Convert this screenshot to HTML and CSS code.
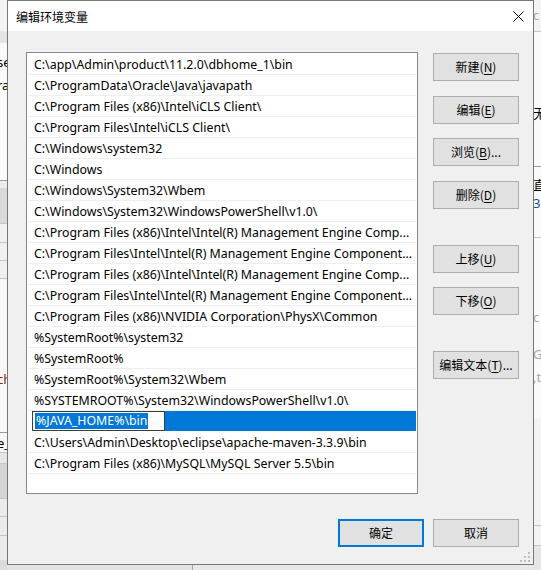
FILE: index.html
```html
<!DOCTYPE html>
<html lang="zh-CN">
<head>
<meta charset="utf-8">
<title>编辑环境变量</title>
<link rel="stylesheet" href="styles.css">
</head>
<body>
<div class="desk">
  <div class="strip strip-l">
    <div class="b h31 c-f3"></div>
    <div class="b h12 c-e4"></div>
    <div class="b h137 c-fa frag">
      <div class="fl t1">se</div>
      <div class="fl t2">ra</div>
    </div>
    <div class="ln dark"></div>
    <div class="b h7 c-ec"></div>
    <div class="b h35 c-d9"></div>
    <div class="ln"></div>
    <div class="b h18 c-f0"></div>
    <div class="ln"></div>
    <div class="b h17 c-f0"></div>
    <div class="ln"></div>
    <div class="b h17 c-f0"></div>
    <div class="ln"></div>
    <div class="b h153 c-f7 frag">
      <div class="fl t3 red">ch</div>
    </div>
    <div class="ln dark"></div>
    <div class="b h19 c-f7 frag"><div class="fl t4">e_</div></div>
    <div class="ln"></div>
    <div class="b h10 c-e6"></div>
    <div class="ln"></div>
    <div class="b h34 c-d5"></div>
    <div class="ln"></div>
    <div class="b h17 c-ec"></div>
    <div class="ln"></div>
    <div class="b h18 c-ec"></div>
    <div class="ln"></div>
    <div class="b h24 c-ec"></div>
    <div class="b fill c-dc"></div>
  </div>
  <div class="mid">
    <div class="mid-bottom">
      <div class="mb-left"></div>
      <div class="mb-right"></div>
    </div>
  </div>
  <div class="strip strip-r">
    <div class="b h31 c-f3 frag"><div class="fr r0 grey">c</div></div>
    <div class="ln"></div>
    <div class="b h134 c-fa frag"><div class="fr r1">无</div></div>
    <div class="ln dark"></div>
    <div class="b h70 c-fa frag">
      <div class="fr r2">直</div>
      <div class="fr r3 blue">3.</div>
    </div>
    <div class="ln"></div>
    <div class="b h180 c-fa frag">
      <div class="fr r4 grey">c</div>
      <div class="fr r5 grey">G</div>
      <div class="fr r6 grey">,t</div>
      <div class="fr r7">oi</div>
    </div>
    <div class="b h107 c-f3"></div>
    <div class="ln"></div>
    <div class="b h19 c-f3"></div>
    <div class="ln"></div>
    <div class="b fill c-e6"></div>
  </div>

  <div class="dialog">
    <div class="titlebar">
      <span class="title">编辑环境变量</span>
      <span class="close">
        <svg width="11" height="11" viewBox="0 0 11 11"><path d="M0.5 0.5 L10.5 10.5 M10.5 0.5 L0.5 10.5" stroke="#000" stroke-width="1" fill="none"/></svg>
      </span>
    </div>
    <div class="body">
      <div class="main">
        <div class="list">
          <div class="row">C:\app\Admin\product\11.2.0\dbhome_1\bin</div>
          <div class="row">C:\ProgramData\Oracle\Java\javapath</div>
          <div class="row">C:\Program Files (x86)\Intel\iCLS Client\</div>
          <div class="row">C:\Program Files\Intel\iCLS Client\</div>
          <div class="row">C:\Windows\system32</div>
          <div class="row">C:\Windows</div>
          <div class="row">C:\Windows\System32\Wbem</div>
          <div class="row">C:\Windows\System32\WindowsPowerShell\v1.0\</div>
          <div class="row">C:\Program Files (x86)\Intel\Intel(R) Management Engine Comp...</div>
          <div class="row">C:\Program Files\Intel\Intel(R) Management Engine Component...</div>
          <div class="row">C:\Program Files (x86)\Intel\Intel(R) Management Engine Comp...</div>
          <div class="row">C:\Program Files\Intel\Intel(R) Management Engine Component...</div>
          <div class="row">C:\Program Files (x86)\NVIDIA Corporation\PhysX\Common</div>
          <div class="row">%SystemRoot%\system32</div>
          <div class="row">%SystemRoot%</div>
          <div class="row">%SystemRoot%\System32\Wbem</div>
          <div class="row">%SYSTEMROOT%\System32\WindowsPowerShell\v1.0\</div>
          <div class="row editing">
            <div class="edit-pad"></div>
            <div class="editbox"><span class="sel">%JAVA_HOME%\bin</span></div>
            <div class="edit-fill"></div>
          </div>
          <div class="row">C:\Users\Admin\Desktop\eclipse\apache-maven-3.3.9\bin</div>
          <div class="row">C:\Program Files (x86)\MySQL\MySQL Server 5.5\bin</div>
        </div>
        <div class="side">
          <div class="btn">新建(<u>N</u>)</div>
          <div class="btn g15">编辑(<u>E</u>)</div>
          <div class="btn g14">浏览(<u>B</u>)...</div>
          <div class="btn g15">删除(<u>D</u>)</div>
          <div class="btn g36">上移(<u>U</u>)</div>
          <div class="btn g14">下移(<u>O</u>)</div>
          <div class="btn g36">编辑文本(<u>T</u>)...</div>
        </div>
      </div>
      <div class="footer">
        <div class="btn default">确定</div>
        <div class="btn">取消</div>
      </div>
    </div>
    <svg class="grip" width="11" height="11" viewBox="0 0 11 11">
      <rect x="8" y="0" width="2" height="2" fill="#bdbdbd"/>
      <rect x="4" y="4" width="2" height="2" fill="#bdbdbd"/>
      <rect x="8" y="4" width="2" height="2" fill="#bdbdbd"/>
      <rect x="0" y="8" width="2" height="2" fill="#bdbdbd"/>
      <rect x="4" y="8" width="2" height="2" fill="#bdbdbd"/>
      <rect x="8" y="8" width="2" height="2" fill="#bdbdbd"/>
    </svg>
  </div>
</div>
</body>
</html>
```

FILE: styles.css
```css
* { box-sizing: border-box; }
html, body { margin: 0; padding: 0; }
body {
  width: 541px;
  height: 570px;
  overflow: hidden;
  background: #ececec;
  font-family: "Noto Sans", "Noto Sans CJK SC", sans-serif;
  font-size: 12px;
  color: #000;
}

.desk {
  position: relative;
  width: 541px;
  height: 570px;
  display: flex;
}

/* background window fragments */
.strip {
  width: 7px;
  display: flex;
  flex-direction: column;
  overflow: hidden;
  flex: none;
}
.strip-r { width: 8px; }
.b { flex: none; }
.fill { flex: 1; }
.ln { height: 1px; flex: none; background: #c6c6c6; }
.ln.dark { background: #9a9a9a; }
.h7 { height: 7px; } .h10 { height: 10px; } .h12 { height: 12px; }
.h17 { height: 17px; } .h18 { height: 18px; } .h19 { height: 19px; }
.h24 { height: 24px; } .h31 { height: 31px; } .h34 { height: 34px; }
.h35 { height: 35px; } .h70 { height: 70px; } .h107 { height: 107px; }
.h134 { height: 134px; } .h137 { height: 137px; } .h153 { height: 153px; }
.h180 { height: 180px; }
.c-f3 { background: #f3f3f3; } .c-e4 { background: #e4e4e4; }
.c-fa { background: #fafafa; } .c-ec { background: #ececec; }
.c-d9 { background: #d9d9d9; } .c-f0 { background: #f0f0f0; }
.c-f7 { background: #f7f7f7; } .c-e6 { background: #e6e6e6; }
.c-d5 { background: #d5d5d5; } .c-dc { background: #dcdcdc; }

.frag {
  display: flex;
  flex-direction: column;
  font-size: 13px;
  line-height: 16px;
  white-space: nowrap;
}
.fl { margin-left: -3px; }
.fr { margin-left: 0; }
.t1 { margin-top: 11px; }
.t2 { margin-top: 7px; }
.t3 { margin-top: 92px; }
.t4 { margin-top: 2px; }
.r0 { margin-top: 7px; }
.r1 { margin-top: 73px; font-family: "Noto Sans CJK SC", sans-serif; }
.r2 { margin-top: 10px; font-family: "Noto Sans CJK SC", sans-serif; }
.r3 { margin-top: 2px; }
.r4 { margin-top: 71px; }
.r5 { margin-top: 21px; }
.r6 { margin-top: 7px; }
.r7 { margin-top: 40px; }
.red { color: #8a1f1f; }
.grey { color: #a9a9a9; }
.blue { color: #1d4f8f; }

.mid {
  flex: 1;
  display: flex;
  flex-direction: column;
  justify-content: flex-end;
  background: #ececec;
}
.mid-bottom {
  height: 5px;
  display: flex;
}
.mb-left { width: 186px; background: #e4e4e4; border-right: 1px solid #a8a8a8; }
.mb-right { flex: 1; background: #e8e8e8; }

/* dialog */
.dialog {
  position: absolute;
  left: 7px;
  top: 0;
  width: 527px;
  height: 565px;
  border: 1px solid #6f7c6f;
  background: #f0f0f0;
  display: flex;
  flex-direction: column;
}
.titlebar {
  height: 30px;
  flex: none;
  background: #fff;
  display: flex;
  align-items: center;
  justify-content: space-between;
  padding-left: 8px;
}
.title {
  font-family: "Noto Sans CJK SC", sans-serif;
  font-size: 12px;
  line-height: 16px;
  margin-top: 1px;
}
.close {
  width: 30px;
  height: 30px;
  display: flex;
  align-items: center;
  justify-content: center;
}
.close svg { display: block; }

.body {
  flex: 1;
  display: flex;
  flex-direction: column;
  padding: 21px 14px 0 18px;
}
.main {
  display: flex;
  gap: 15px;
  height: 442px;
}
.list {
  width: 392px;
  height: 442px;
  border: 1px solid #828790;
  background: #fff;
  padding-top: 1px;
  overflow: hidden;
}
.row {
  height: 21px;
  margin: 0 1px 0 2px;
  border-bottom: 1px solid #efefef;
  padding: 1px 0 0 5px;
  font-family: "Noto Sans", "Noto Sans CJK SC", sans-serif;
  font-size: 12.35px;
  line-height: 20px;
  white-space: nowrap;
  overflow: hidden;
}
.row.editing {
  display: flex;
  padding: 0;
  margin-left: 0;
  border-bottom: none;
}
.edit-pad { width: 5px; flex: none; }
.editbox {
  width: 133px;
  height: 20px;
  flex: none;
  border: 1px solid #3b3b3b;
  background: #fff;
  padding: 1px 0 0 2px;
  line-height: 16px;
}
.sel {
  display: inline-block;
  background: #0078d7;
  color: #fff;
  height: 16px;
  padding: 0 1px;
}
.edit-fill { flex: 1; background: #0078d7; height: 20px; }

.side {
  width: 86px;
  display: flex;
  flex-direction: column;
  padding-top: 1px;
}
.btn {
  width: 86px;
  height: 28px;
  flex: none;
  border: 1px solid #adadad;
  background: #e1e1e1;
  display: flex;
  align-items: center;
  justify-content: center;
  font-family: "Noto Sans CJK SC", sans-serif;
  font-size: 12px;
  line-height: 16px;
}
.btn u { text-decoration-thickness: 1px; text-underline-offset: 2px; }
.g14 { margin-top: 14px; }
.g15 { margin-top: 15px; }
.g36 { margin-top: 36px; }

.footer {
  margin-top: 25px;
  display: flex;
  justify-content: flex-end;
  gap: 9px;
}
.btn.default {
  border: 2px solid #0078d7;
}

.grip {
  position: absolute;
  right: 2px;
  bottom: 1px;
}
```
